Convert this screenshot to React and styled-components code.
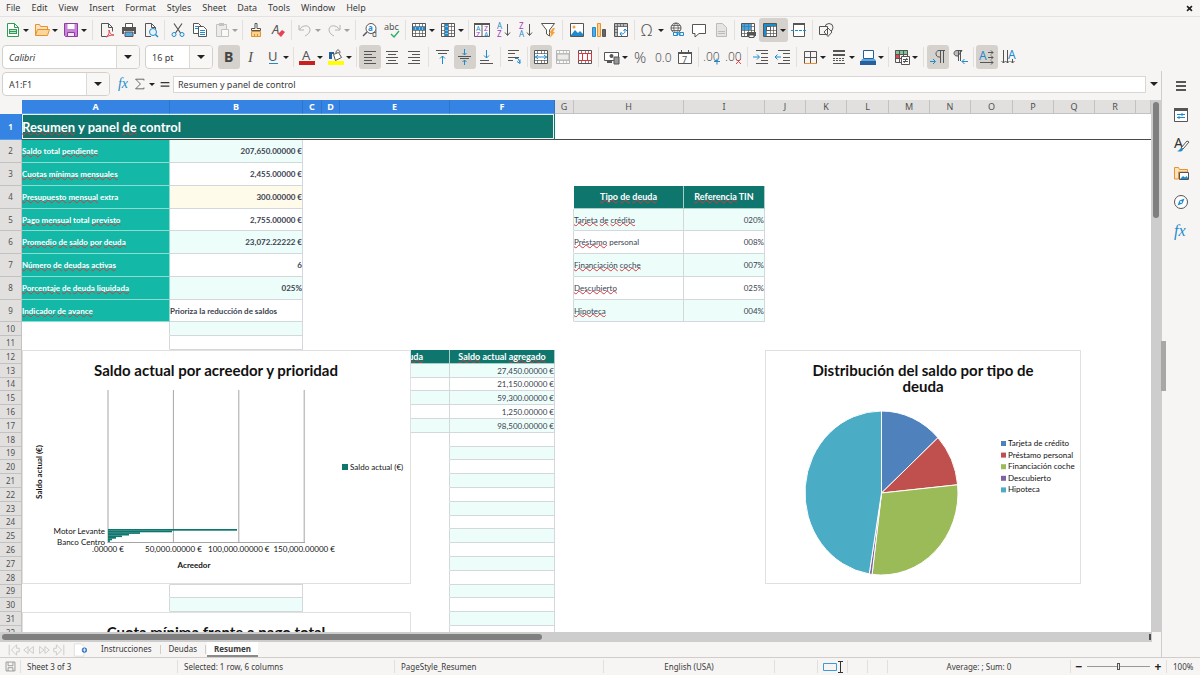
import React from 'react'
import styled, { createGlobalStyle } from 'styled-components'

const UI_FONT = '"Noto Sans", "Open Sans", sans-serif'
const CELL_FONT = 'Lato, "Open Sans", sans-serif'

const GlobalStyle = createGlobalStyle`
  * {
    box-sizing: border-box;
  }

  body {
    margin: 0;
    background: #f6f5f4;
    color: #3a3a3a;
    font-family: ${UI_FONT};
    font-size: 9px;
  }

  button, input {
    font: inherit;
    color: inherit;
    border: 0;
    padding: 0;
    margin: 0;
    background: none;
    outline: none;
  }
`

const Window = styled.div`
  display: flex;
  flex-direction: column;
  height: 100vh;
  overflow: hidden;
`

/* ---------- menu and toolbars ---------- */

const MenuBar = styled.nav`
  display: flex;
  align-items: center;
  height: 17px;
  flex: none;
  padding: 0 5px 0 6px;
  border-bottom: 1px solid #e4e2e0;
`

const MenuItem = styled.button`
  margin-right: 11px;
  line-height: 16px;
`

const CloseButton = styled.button`
  margin-left: auto;
  width: 11px;
  height: 14px;
  display: flex;
  align-items: center;
  justify-content: center;
`

const ToolBar = styled.div`
  display: flex;
  align-items: center;
  height: 27px;
  flex: none;
  padding: 0 0 1px 2px;
`

const ToolButton = styled.button`
  display: flex;
  align-items: center;
  flex: none;
  width: ${p => (p.$drop ? 29 : 22)}px;
  height: 24px;
  padding-left: 3px;
  border-radius: 3px;
  background: ${p => (p.$on ? '#d5d1cd' : 'transparent')};
  opacity: ${p => (p.$dim ? 0.4 : 1)};
`

const Separator = styled.span`
  flex: none;
  width: ${p => p.$wide ? 7 : 5}px;
  height: 20px;
  display: flex;
  justify-content: center;

  &::before {
    content: '';
    width: 1px;
    background: #e2e0dd;
  }
`

const Caret = styled.span`
  flex: none;
  border: solid transparent;
  border-width: 3px 3px 0;
  border-top-color: #222;
  margin-left: 2px;
`

const Combo = styled.div`
  display: flex;
  flex: none;
  width: ${p => p.$width}px;
  height: 24px;
  margin-right: 5px;
  border: 1px solid #d3cfcb;
  border-radius: 4px;
  background: #fff;
  overflow: hidden;

  input {
    flex: 1;
    min-width: 0;
    padding-left: 6px;
    font-style: ${p => (p.$italic ? 'italic' : 'normal')};
  }

  button {
    width: 23px;
    display: flex;
    align-items: center;
    justify-content: center;
    border-left: 1px solid #dcd9d6;
    background: #f8f7f6;
  }
`

const BigCaret = styled.span`
  border: solid transparent;
  border-width: 4px 4px 0;
  border-top-color: #222;
`

/* ---------- body ---------- */

const Main = styled.main`
  display: flex;
  flex: 1;
  min-height: 0;
`

const Document = styled.section`
  display: flex;
  flex-direction: column;
  flex: 1;
  min-width: 0;
`

const FormulaBar = styled.div`
  display: flex;
  align-items: center;
  flex: none;
  height: 29px;
  padding: 0 0 3px 2px;
`

const FormulaButton = styled.button`
  display: flex;
  align-items: center;
  justify-content: center;
  flex: none;
  width: ${p => (p.$drop ? 24 : 17)}px;
`

const FormulaInput = styled.input`
  flex: 1;
  min-width: 0;
  height: 17px;
  padding-left: 4px;
  border: 1px solid #d9d6d3;
  background: #fff;
`

const FormulaDrop = styled.button`
  width: 15px;
  display: flex;
  justify-content: center;
`

const SheetRow = styled.div`
  display: flex;
  flex: 1;
  min-height: 0;
`

const SheetView = styled.div`
  position: relative;
  flex: 1;
  min-width: 0;
  background: #fff;
  overflow: hidden;
`

const Grid = styled.table`
  width: 100%;
  table-layout: fixed;
  border-collapse: separate;
  border-spacing: 0;
  font-family: ${CELL_FONT};
  font-size: 8px;
  line-height: 12px;

  th, td {
    padding: 0;
    overflow: hidden;
    white-space: nowrap;
  }
`

const HeadCell = styled.th`
  font-family: ${UI_FONT};
  font-size: ${p => (p.scope === 'col' ? 9 : 8)}px;
  font-weight: ${p => (p.$on ? 700 : 400)};
  color: ${p => (p.$on ? '#fff' : '#505050')};
  background: ${p => (p.$on ? '#3584e4' : '#e1e0df')};
  border-right: 1px solid ${p => (p.$on ? '#2c74cc' : '#c4c2c0')};
  border-bottom: 1px solid ${p => (p.$on ? '#5f9fe8' : '#c4c2c0')};
`

const Corner = styled.th`
  background: #f6f5f4;
`

const Cell = styled.td`
  background: ${p => p.$bg || '#fff'};
  color: ${p => p.$color || '#3b4250'};
  font-size: ${p => (p.$heading ? 9 : 8)}px;
  font-weight: ${p => (p.$bold ? 700 : 400)};
  text-align: ${p => p.$align || 'left'};
  border-right: 1px solid ${p => p.$side || p.$line || '#fff'};
  border-bottom: 1px solid ${p => p.$line || '#fff'};
`

const TitleCell = styled.td`
  background: #0f766e;
  color: #fff;
  font-size: 13px;
  font-weight: 700;
  line-height: 20px;
  border-right: 1px solid #0f766e;
  border-bottom: 1px solid #4a4a4a;
  box-shadow: inset 0 0 0 1px #e6f3f1;
`

const FrozenCell = styled.td`
  border-bottom: 1px solid #4a4a4a;
`

const Misspelt = styled.span`
  text-decoration: underline wavy #d9363e 1px;
  text-decoration-skip-ink: none;
  text-underline-offset: -1px;
`

const FloatingChart = styled.figure`
  position: absolute;
  left: ${p => p.$x}px;
  top: ${p => p.$y}px;
  margin: 0;
  background: #fff;
  border: 1px solid #e0e0e0;

  svg {
    display: block;
    font-family: ${CELL_FONT};
    font-size: 8px;
  }
`

const VScroll = styled.div`
  flex: none;
  width: 10px;
  padding: 2px;
  background: #cdcdcd;

  &::before {
    content: '';
    display: block;
    height: 22%;
    border-radius: 3px;
    background: #7f7f7f;
  }
`

const HScroll = styled.div`
  display: flex;
  align-items: center;
  justify-content: space-between;
  flex: none;
  height: 10px;
  margin-right: 9px;
  padding: 2px 1px 2px 2px;
  background: #cdcdcd;

  &::before {
    content: '';
    width: 47%;
    height: 6px;
    border-radius: 3px;
    background: #7f7f7f;
  }

  &::after {
    content: '';
    width: 2px;
    height: 6px;
    background: #4d4d4d;
  }
`

const TabBar = styled.div`
  display: flex;
  align-items: stretch;
  flex: none;
  height: 15px;
  padding-left: 6px;
  font-size: 8px;
`

const TabNav = styled.button`
  width: 15px;
  display: flex;
  align-items: center;
  justify-content: center;
`

const AddTab = styled.button`
  width: 28px;
  display: flex;
  align-items: center;
  justify-content: center;
`

const Tab = styled.button`
  padding: 0 7px;
  line-height: 13px;
  font-weight: ${p => (p.$on ? 700 : 400)};
  background: ${p => (p.$on ? '#fff' : 'transparent')};
  border-bottom: 2px solid ${p => (p.$on ? '#8a8a8a' : 'transparent')};
`

const TabLine = styled.span`
  width: 1px;
  margin: 3px 1px;
  background: #d0cecb;
`

const SideBar = styled.aside`
  position: relative;
  display: flex;
  flex-direction: column;
  align-items: center;
  flex: none;
  width: 39px;
  border-left: 1px solid #d0cdca;
`

const SideButton = styled.button`
  width: 28px;
  height: 29px;
  display: flex;
  align-items: center;
  justify-content: center;
`

const SideHandle = styled.button`
  position: absolute;
  left: -1px;
  top: 46%;
  width: 5px;
  height: 50px;
  background: #a9a7a5;
`

const StatusBar = styled.footer`
  display: grid;
  grid-template-columns: 21fr 157fr 217fr 209fr 171fr 43fr 30fr 20fr 20fr 183fr 96fr 33fr;
  align-items: center;
  flex: none;
  height: 18px;
  border-top: 1px solid #d0cdca;
  font-size: 8px;
`

const StatusItem = styled.div`
  display: flex;
  align-items: center;
  justify-content: ${p => (p.$center ? 'center' : 'flex-start')};
  min-width: 0;
  height: 13px;
  padding: 0 ${p => (p.$tight ? 4 : 6)}px;
  white-space: nowrap;
  border-right: 1px solid #e2e0dd;

  &:last-child {
    border-right: 0;
  }
`

const ZoomButton = styled.button`
  flex: none;
  width: 8px;
  font-size: 12px;
  font-weight: 700;
  line-height: 12px;
  color: #222;
`

const ZoomRange = styled.input`
  flex: 1;
  min-width: 0;
  height: 9px;
  margin: 0 4px;
  appearance: none;
  background: linear-gradient(#999, #999) center / 100% 1px no-repeat;

  &::-webkit-slider-thumb {
    appearance: none;
    width: 3px;
    height: 7px;
    border: 1px solid #555;
    background: #eee;
  }
`

/* ---------- icons, all on a 16px square ---------- */

const ink = '#555'
const blue = '#1e8bcd'
const red = '#c9211e'

const mesh = (
  <g fill="none" stroke={ink}>
    <path fill="#fff" d="M1.5 1.5h13v13h-13z" />
    <path strokeWidth=".7" d="M1.5 4.5h13M1.5 8.5h13M1.5 11.5h13M4.5 1.5v13M8.5 1.5v13M11.5 1.5v13" />
  </g>
)

const glyph = (text, x, y, size, fill, extra) => (
  <text x={x} y={y} fontSize={size} fill={fill} fontFamily="Noto Sans, sans-serif" {...extra}>{text}</text>
)

const ICONS = {
  new: <><path d="M2.5 1.5h7l4 4v9h-11z" fill="#fff" stroke="#2f9e54" /><path d="M9.5 1.5v4h4" fill="none" stroke="#2f9e54" /><path d="M4 7h8v5H4z" fill="#2f9e54" /><path d="M5 8.5h6M5 10.5h6" stroke="#bfe8cb" /></>,
  open: <><path d="M1.5 13.5v-11h4l1 2h7v3" fill="#fbe3bf" stroke="#e8912d" /><path d="M3.5 7.5h12l-2 6h-12z" fill="#fcd59b" stroke="#e8912d" /></>,
  save: <><path d="M1.5 1.5h13v13h-12l-1-1z" fill="#c783d6" stroke="#8e3ca3" /><path d="M4.5 2h7v5h-7z" fill="#fff" /><path d="M4.5 10.5h7v4h-7z" fill="#f3e4f7" stroke="#8e3ca3" /></>,
  pdf: <><path d="M2.5 14.5v-13h7l4 4v4M9.5 1.5v4h4M2.5 14.5h5" fill="none" stroke={ink} /><path d="M7 15c3-2 3.5-4 3-7 1 4 2.5 5 5 5-3 0-5 .5-8 2z" fill="none" stroke="#d9434e" /></>,
  print: <><path d="M4.5 5V1.5h7V5" fill="#fff" stroke={ink} /><path d="M1 5h14v7h-2V9H3v3H1z" fill={ink} /><path d="M4 10h8v4.5H4z" fill="#5aa9e0" stroke={ink} /></>,
  preview: <><path d="M8 14.5H2.5v-13h6l4 4v2M8.5 1.5v4h4" fill="none" stroke={ink} /><circle cx="10" cy="10" r="3.5" fill="#e4f2fb" stroke={blue} /><path d="M12.5 12.5l2.500 2.500" stroke={blue} strokeWidth="1.5" /></>,
  cut: <><path d="M4 1.5l6.500 9.500M12 1.500L5.500 11" stroke={ink} fill="none" strokeWidth="1.2" /><circle cx="4" cy="12.5" r="2" fill="none" stroke={blue} /><circle cx="12" cy="12.5" r="2" fill="none" stroke={blue} /></>,
  copy: <><path d="M1.5 1.5h5l3 3v7h-8z" fill="#fff" stroke={ink} /><path d="M6.5 4.5h5l3 3v7h-8z" fill="#fff" stroke={ink} /><path d="M8 8.5h5M8 10.5h5M8 12.5h5M3 4.5h3M3 6.5h3" stroke={blue} /></>,
  paste: <><path d="M2.5 2.5h10v12h-10z" fill="#ddd" stroke="#777" /><path d="M5 1h5v3H5z" fill="#777" /><path d="M7.5 7.5h7v7h-7z" fill="#fff" stroke="#777" /></>,
  clone: <><path d="M7 1.5h2v5h3.500v2h-9v-2H7z" fill="#fff" stroke={ink} /><path d="M3.5 9.5h9v5h-9z" fill="#fbd38d" stroke="#e8912d" /><path d="M6.5 12v2M9.5 12v2" stroke="#e8912d" /></>,
  clear: <>{glyph('A', 2, 12, 13, ink, { fontStyle: 'italic' })}<path d="M8 12l4-4 3 2-4 5z" fill="#e8424e" /></>,
  undo: <path d="M2 3v5h5M2.5 7.5C5 3 13 2 13 8c0 3-3 5-5 6" fill="none" stroke={ink} />,
  redo: <path d="M14 3v5H9M13.5 7.5C11 3 3 2 3 8c0 3 3 5 5 6" fill="none" stroke={ink} />,
  find: <><circle cx="9" cy="6.5" r="5" fill="#fff" stroke={ink} /><path d="M5 10l-4 4" stroke={ink} strokeWidth="1.5" />{glyph('a', 6, 9, 8, blue, { fontWeight: 700 })}{glyph('d', 10, 15, 8, ink)}</>,
  spell: <>{glyph('abc', 0, 8, 9, ink)}<path d="M7 12l3 3 5-6" fill="none" stroke="#27ae60" strokeWidth="1.3" /></>,
  row: <>{mesh}<path d="M2 5h12v3H2z" fill={blue} /><path d="M4.5 5v3M8.5 5v3M11.5 5v3" stroke="#7dbde6" /></>,
  col: <>{mesh}<path d="M5 2h3v12H5z" fill={blue} /><path d="M5 4.5h3M5 8.5h3M5 11.5h3" stroke="#7dbde6" /></>,
  sort: <><path d="M.5 1.5h15v13H.5zM8 2v12" fill="#fff" stroke={ink} /><path d="M0 1h16v2H0z" fill={ink} />{glyph('A', 2, 9, 7, blue)}{glyph('Z', 2, 15, 7, '#a33bc2')}{glyph('Z', 10, 9, 7, '#a33bc2')}{glyph('A', 10, 15, 7, blue)}</>,
  asc: <>{glyph('A', 1, 7, 8, blue)}{glyph('Z', 1, 15, 8, '#a33bc2')}<path d="M11.5 2v11M9 10.5l2.500 3 2.500-3" fill="none" stroke={ink} /></>,
  desc: <>{glyph('Z', 1, 7, 8, '#a33bc2')}{glyph('A', 1, 15, 8, blue)}<path d="M11.5 2v11M9 10.5l2.500 3 2.500-3" fill="none" stroke={ink} /></>,
  filter: <><path d="M1.5 1.5h13L9.500 8v6l-3-2V8z" fill="#fff" stroke={ink} /><path d="M13 6l-4 5h2l-1 5 5-6h-2l2-4z" fill="#f2a33a" /></>,
  image: <><path d="M1.5 1.5h13v13h-13z" fill="#fff" stroke={ink} /><path d="M2 13l4-5 3 3 2-2 3 3v2H2z" fill={blue} /><circle cx="5" cy="5" r="1.5" fill="#f2a33a" /></>,
  chart: <><path d="M1.5 5.5h3v9h-3z" fill="#5aa9e0" stroke={blue} /><path d="M6.5 1.5h3v13h-3z" fill="#fbd38d" stroke="#e8912d" /><path d="M11.5 7.5h3v7h-3z" fill="#666" stroke={ink} /></>,
  pivot: <><path d="M1.5 1.5h13v13h-13z" fill="#fff" stroke={ink} /><path d="M2 2h12v3H2zM2 5h3v9H2z" fill="#bbb" /><path d="M4.5 2v12M2 4.5h12M7.5 2v3M10.5 2v3M2 7.5h3M2 10.5h3" stroke={ink} strokeWidth=".7" /><path d="M7 12c5 0 5-1 5-5M10.5 9L12 7l2 2M8.5 10L7 12l2 2" fill="none" stroke={blue} /></>,
  omega: glyph('Ω', 1, 14, 16, ink, { fontWeight: 300 }),
  link: <><circle cx="7" cy="6" r="5" fill="none" stroke={ink} /><path d="M2 6h10M7 1c-3 3-3 7 0 10M7 1c3 3 3 7 0 10M3 3.5h8M3 8.5h8" fill="none" stroke={ink} strokeWidth=".8" /><path d="M4.5 10.5h4v3h-4zM10.5 10.5h4v3h-4zM7 12h5" fill="#f6f5f4" stroke={blue} /></>,
  comment: <path d="M1.5 2.5h13v9H8l-4 3.500v-3.500H1.500z" fill="#fff" stroke={ink} />,
  header: <path d="M3.5 1.5h6l4 4v9h-10zM5 9.5h7M5 11.5h7" fill="#ccc" stroke="#666" />,
  printRange: <>{mesh}<path d="M2 2h9v6H2z" fill={blue} opacity=".8" /><path d="M7 10h9v4H7z" fill={ink} /><path d="M9 13h5v2.500H9z" fill="#fff" stroke={ink} /></>,
  freeze: <>{mesh}<path d="M2 2h12v2H2zM2 4h2v10H2z" fill={blue} /><path d="M4.5 4.5h4v4h-4z" fill="#fff" stroke={ink} /></>,
  split: <><path d="M2.5 1.5h11v13h-11z" fill="#fff" stroke={ink} /><path d="M2 1h12v2H2z" fill={ink} /><path d="M0 8.5h16" stroke={blue} strokeDasharray="3 1" /></>,
  shapes: <><circle cx="11" cy="5.5" r="4" fill="#f6f5f4" stroke={ink} /><path d="M1.5 4.5h8v8h-8zM10 6l4 4-4 4.500-4-4.500z" fill="#f6f5f4" stroke={ink} /></>,
  bold: glyph('B', 3, 13, 14, '#444', { fontWeight: 700 }),
  italic: <text x="5" y="13" fontSize="15" fill={ink} fontStyle="italic" fontFamily="Liberation Serif, serif">I</text>,
  underline: <>{glyph('U', 3, 12, 13, ink)}<path d="M4 14.5h9" stroke={blue} /></>,
  fontColor: <>{glyph('A', 3, 11, 13, ink)}<path d="M0 12h16v4H0z" fill={red} /></>,
  highlight: <><path d="M5.5 5.5l5-2 3 5-6 3z" fill="#fff" stroke={ink} /><path d="M1 3h5v2H4v5H1z" fill="#245f9e" /><path d="M8 4c0-4 4-4 4 0" fill="none" stroke={ink} /><path d="M0 12h16v4H0z" fill="#ffff00" /></>,
  left: <path d="M2 2.5h12M2 5.5h8M2 8.5h12M2 11.5h8M2 14.5h12" stroke={ink} />,
  center: <path d="M2 2.5h12M4 5.5h8M2 8.5h12M4 11.5h8M2 14.5h12" stroke={ink} />,
  right: <path d="M2 2.5h12M6 5.5h8M2 8.5h12M6 11.5h8M2 14.5h12" stroke={ink} />,
  top: <><path d="M1 1.5h13M3 4.5h9" stroke={ink} /><path d="M7.5 15V7M5 9.5L7.500 7 10 9.500" stroke={blue} fill="none" /></>,
  middle: <><path d="M1 7.5h13M3 9.5h9" stroke={ink} /><path d="M7.5 0v6M5.5 4l2 2 2-2M7.5 16v-5M5.5 13l2-2 2 2" stroke={blue} fill="none" /></>,
  bottom: <><path d="M1 11.5h9M1 14.5h13" stroke={ink} /><path d="M7.5 1v8M5 6.5L7.500 9 10 6.500" stroke={blue} fill="none" /></>,
  wrap: <><path d="M2 1.5h11M2 4.5h7M2 8.5h11M2 11.5h5" stroke={ink} /><path d="M9 9.5h3l2 4M11 12.5l3 2v-4" stroke={blue} fill="none" /></>,
  merge: <>{mesh}<path d="M2 5h12v6H2z" fill="#fff" /><path d="M2 8h12M5 6L2.500 8 5 10M11 6l2.500 2-2.500 2" stroke={blue} fill="none" /></>,
  mergeOff: <>{mesh}<path d="M2 5h12v6H2z" fill="#ddd" stroke={ink} /></>,
  unmerge: <>{mesh}<path d="M1.5 4.5h13v7h-13zM5.5 4.5v7M10.5 4.5v7" fill="#fff" stroke="#d9363e" /></>,
  currency: <><path d="M.5 3.5h14v8H.5z" fill="#fff" stroke={ink} /><circle cx="7.5" cy="7" r="2" fill={ink} /><path d="M10 8h5v7h-5z" fill="#999" stroke={ink} /><path d="M3 12h5v2H3z" fill={ink} /></>,
  percent: glyph('%', 1, 14, 15, ink, { fontWeight: 300 }),
  number: glyph('0.0', 0, 13, 12, ink, { fontWeight: 300 }),
  date: <><path d="M1.5 3.5h13v11h-13z" fill="#fff" stroke={ink} /><path d="M1 3h14v2H1zM4 1h1v3H4zM11 1h1v3h-1z" fill={ink} />{glyph('7', 5, 14, 9, ink)}</>,
  addDec: <>{glyph('.00', -1, 12, 12, ink, { fontWeight: 300 })}<path d="M10 12.5h6M13 9.5v6" stroke={blue} /></>,
  delDec: <>{glyph('.00', -1, 12, 12, ink, { fontWeight: 300 })}<path d="M10 10l5 5M15 10l-5 5" stroke="#e8424e" /></>,
  indent: <><path d="M3 1.5h12M8 4.5h7M8 8.5h7M8 11.5h7M3 14.5h12" stroke={ink} /><path d="M0 8h6M4 5.5L6.500 8 4 10.500" stroke={blue} fill="none" /></>,
  outdent: <><path d="M3 1.5h12M8 4.5h7M8 8.5h7M8 11.5h7M3 14.5h12" stroke={ink} /><path d="M0 8h6M2.5 5.5L0 8l2.500 2.500" stroke={blue} fill="none" /></>,
  borders: <><path d="M2.5 14V2.500h12V14M2.5 8.5h12M8.5 2.5V14" fill="none" stroke={ink} /><path d="M2 14.5h13" stroke="#e8912d" /></>,
  borderStyle: <><path d="M2 2h12M2 6h12" stroke={ink} strokeWidth="2" /><path d="M2 9.5h12M2 11.5h12" stroke={ink} strokeDasharray="2 1" /><path d="M2 14.5h12" stroke={ink} /></>,
  borderColor: <><path d="M3.5 1.5h10v8h-10z" fill="#fff" stroke="#245f9e" /><path d="M2 10l-1 2h15l-1-2z" fill="#5aa9e0" /><path d="M0 12h16v4H0z" fill="#2a6099" /></>,
  cond: <><path d="M1 1h13v4H1z" fill="#7cc796" /><path d="M1 5h5v4H1z" fill="#e8424e" /><path d="M1.5 1.5h12v12h-12zM1.5 5.5h12M1.5 9.5h12M5.5 1.5v12M9.5 1.5v12" fill="none" stroke={ink} /><path d="M7.5 7.5h8v8h-8z" fill="#fff" stroke={ink} /><path d="M9 10.5h5M9 12.5h5M13 9l-3 5" stroke={ink} /></>,
  ltr: <><path d="M10.5 14V2M13.5 14V2M15 1.5H9C5 1.500 5 8 9 8h1" fill="none" stroke={ink} /><path d="M0 12.5h5M3 10l2.500 2.500L3 15" stroke={blue} fill="none" /></>,
  rtl: <><path d="M6.5 12V2M8.5 12V2M10 1.5H5C1 1.500 1 7 5 7h1z" fill="#bbb" stroke={ink} /><path d="M10 12.5h6M12.5 10L10 12.500l2.500 2.500" stroke={blue} fill="none" /></>,
  textH: <>{glyph('A', 0, 11, 12, blue)}<path d="M9 3.5h5M9 8.5h5M1 13.5h13M12 1.5l2 2-2 2M12 6.5l2 2-2 2M12 11.5l2 2-2 2" stroke={ink} fill="none" /></>,
  textV: <>{glyph('A', 7, 10, 12, blue)}<path d="M2.5 1v13M6.5 1v13M11.5 10v4M.5 12l2 2 2-2M4.5 12l2 2 2-2M9.5 12l2 2 2-2" stroke={ink} fill="none" /></>,
  fx: <text x="1" y="13" fontSize="16" fill={blue} fontStyle="italic" fontFamily="Liberation Serif, serif">fx</text>,
  sum: <path d="M12.5 4V2.500H3L8.500 8 3 13.500h9.500V12" fill="none" stroke={ink} />,
  equals: <path d="M3 6.5h10M3 10.5h10" stroke="#333" strokeWidth="1.5" />,
  menu: <path d="M3 4h10M3 8h10M3 12h10" stroke="#222" strokeWidth="1.5" />,
  props: <><path d="M1.5 2.5h13v12h-13z" fill="#fff" stroke={ink} /><path d="M1 1h14v3H1z" fill={ink} /><path d="M4 7.5h8M4 10.5h8M9 6v3M6 9v3" stroke={blue} /></>,
  styles: <>{glyph('A', 1, 12, 14, '#333')}<path d="M14 5l2 1-6 7-2-1z" fill="#fff" stroke={ink} /><path d="M4 15c3 0 2-3 5-3l1 1c0 3-4 3-6 2z" fill={blue} /></>,
  gallery: <><path d="M1.5 14V2.500h4l1 2h8V7M1.5 14h4V7h9" fill="#fbe3bf" stroke="#e8912d" /><path d="M6.5 7.5h9v7h-9z" fill="#fff" stroke={ink} /><path d="M7 14l3-3 2 1.500 1.500-1.500L15 13v1z" fill={blue} /></>,
  compass: <><circle cx="8" cy="8" r="6.5" fill="#fff" stroke={ink} /><path d="M11.5 4.5l-2 5-5 2 2-5z" fill={blue} /><circle cx="8" cy="8" r="1" fill="#fff" /></>,
  floppy: <path d="M2.5 2.5h11v11h-11zM5 3v4h6V3M5 13.5v-4h6v4" fill="none" stroke="#8a8a8a" />,
  close: <path d="M5 5l6 6M11 5l-6 6" stroke="#222" strokeWidth="2" />,
  navFirst: <path d="M2.5 2v12M11 2L5 8l6 6V10h3V6h-3z" fill="none" stroke="#c9c6c3" />,
  navPrev: <path d="M7 4L2 8l5 4zM13 4L8 8l5 4z" fill="none" stroke="#c9c6c3" />,
  navNext: <path d="M9 4l5 4-5 4zM3 4l5 4-5 4z" fill="none" stroke="#c9c6c3" />,
  navLast: <path d="M13.5 2v12M5 2l6 6-6 6V10H2V6h3z" fill="none" stroke="#c9c6c3" />,
  addSheet: <><path d="M1.5 1h8l3 3v11h-11z" fill="#fff" stroke="#ddd" /><circle cx="13" cy="8" r="3" fill="#2a6fc0" /><path d="M11 8h4M13 6v4" stroke="#fff" /></>,
}

const Svg = styled.svg`
  flex: none;
  display: block;
  overflow: visible;
`

function Icon({ name, size = 16 }) {
  return (
    <Svg width={size} height={size} viewBox="0 0 16 16" aria-hidden="true">
      {ICONS[name]}
    </Svg>
  )
}

/* ---------- toolbar contents: [icon, label, flags], d drop-down, o pressed, x disabled ---------- */

const STANDARD = [
  ['new', 'New', 'd'], ['open', 'Open', 'd'], ['save', 'Save', 'd'], '||',
  ['pdf', 'Export as PDF'], ['print', 'Print'], ['preview', 'Print Preview'], '|',
  ['cut', 'Cut'], ['copy', 'Copy'], ['paste', 'Paste', 'dx'], '|',
  ['clone', 'Clone Formatting'], ['clear', 'Clear Formatting'], '|',
  ['undo', 'Undo', 'dx'], ['redo', 'Redo', 'dx'], '||',
  ['find', 'Find and Replace'], ['spell', 'Spelling'], '|',
  ['row', 'Row', 'd'], ['col', 'Column', 'd'], '|',
  ['sort', 'Sort'], ['asc', 'Sort Ascending'], ['desc', 'Sort Descending'], ['filter', 'AutoFilter'], '||',
  ['image', 'Insert Image'], ['chart', 'Insert Chart'], ['pivot', 'Pivot Table'], '|',
  ['omega', 'Special Character', 'd'], ['link', 'Hyperlink'], ['comment', 'Comment'], ['header', 'Headers and Footers', 'x'], '|',
  ['printRange', 'Define Print Area'], ['freeze', 'Freeze Rows and Columns', 'do'], ['split', 'Split Window'], '|',
  ['shapes', 'Show Draw Functions'],
]

const FORMATTING = [
  ['bold', 'Bold', 'o'], ['italic', 'Italic'], ['underline', 'Underline', 'd'], '|',
  ['fontColor', 'Font Color', 'd'], ['highlight', 'Background Color', 'd'], '|',
  ['left', 'Align Left', 'o'], ['center', 'Center Horizontally'], ['right', 'Align Right'], '||',
  ['top', 'Align Top'], ['middle', 'Center Vertically', 'o'], ['bottom', 'Align Bottom'], '|',
  ['wrap', 'Wrap Text'], '|',
  ['merge', 'Merge and Center', 'o'], ['mergeOff', 'Merge Cells', 'x'], ['unmerge', 'Unmerge Cells'], '|',
  ['currency', 'Format as Currency', 'd'], ['percent', 'Format as Percent'], ['number', 'Format as Number'], ['date', 'Format as Date'], '|',
  ['addDec', 'Add Decimal Place'], ['delDec', 'Delete Decimal Place'], '|',
  ['indent', 'Increase Indent'], ['outdent', 'Decrease Indent'], '|',
  ['borders', 'Borders', 'd'], ['borderStyle', 'Border Style', 'd'], ['borderColor', 'Border Color', 'd'], '|',
  ['cond', 'Conditional', 'd'], '||',
  ['ltr', 'Left-To-Right', 'o'], ['rtl', 'Right-To-Left'], '|',
  ['textH', 'Text direction from left to right', 'o'], ['textV', 'Text direction from top to bottom'],
]

function Tools({ items }) {
  return items.map((item, i) => {
    if (typeof item === 'string') return <Separator key={i} $wide={item === '||'} />
    const [icon, label, flags = ''] = item
    const drop = flags.includes('d')
    return (
      <ToolButton key={i} aria-label={label} $drop={drop} $on={flags.includes('o')} $dim={flags.includes('x')}>
        <Icon name={icon} />
        {drop && <Caret />}
      </ToolButton>
    )
  })
}

/* ---------- sheet ---------- */

const COLUMNS = [
  ['A', 148], ['B', 133], ['C', 19], ['D', 18], ['E', 110], ['F', 105], ['G', 19], ['H', 110], ['I', 81],
  ['J', 41], ['K', 41], ['L', 42], ['M', 41], ['N', 41], ['O', 42], ['P', 41], ['Q', 41], ['R', 41], ['', null],
]

const ROWS = Array.from({ length: 40 }, (_, i) => i + 1)

const rowHeight = n => {
  if (n === 1) return 26
  if (n < 10) return n % 4 === 1 ? 22 : 23
  return n % 5 === 4 ? 13 : 14
}

const SUMMARY = [
  ['Saldo total pendiente', '207,650.00000 €'],
  ['Cuotas mínimas mensuales', '2,455.00000 €'],
  ['Presupuesto mensual extra', '300.00000 €'],
  ['Pago mensual total previsto', '2,755.00000 €'],
  ['Promedio de saldo por deuda', '23,072.22222 €'],
  ['Número de deudas activas', '6'],
  ['Porcentaje de deuda liquidada', '025%'],
  ['Indicador de avance', 'Prioriza la reducción de saldos'],
]

const RATES = [
  ['Tarjeta de crédito', '020%'],
  ['Préstamo personal', '008%'],
  ['Financiación coche', '007%'],
  ['Descubierto', '025%'],
  ['Hipoteca', '004%'],
]

const BALANCES = [
  ['Tarjeta de crédito', 27450, '#4f81bd'],
  ['Préstamo personal', 21150, '#c0504d'],
  ['Financiación coche', 59300, '#9bbb59'],
  ['Descubierto', 1250, '#8064a2'],
  ['Hipoteca', 98500, '#4bacc6'],
]

const TINT = '#edfdfa'
const LINE = '#d3d8dc'
const KNOWN = ['y', 'panel', 'control', 'total', 'extra', 'personal', 'TIN', 'actual']

const euro = n => `${n.toLocaleString('en-US')}.00000 €`

function Words({ text }) {
  return text.split(' ').map((word, i) => (
    <React.Fragment key={i}>
      {i > 0 && ' '}
      {KNOWN.includes(word) ? word : <Misspelt>{word}</Misspelt>}
    </React.Fragment>
  ))
}

const heading = text => ({ text, bg: '#0f766e', color: '#fff', bold: true, align: 'center', line: '#a9cfcb', check: true, heading: true })

function cellAt(col, row) {
  if (col === 'A' && row >= 2 && row <= 9) {
    return { text: SUMMARY[row - 2][0], bg: '#14b8a6', color: '#fff', bold: true, line: '#8edbd1', check: true }
  }
  if (col === 'B') {
    const bg = row === 4 ? '#fffbeb' : row % 2 ? '#fff' : TINT
    return { text: row <= 9 ? SUMMARY[row - 2][1] : '', bg, bold: true, align: row === 9 ? 'left' : 'right', line: LINE }
  }
  if ((col === 'H' || col === 'I') && row >= 4 && row <= 9) {
    if (row === 4) return heading(col === 'H' ? 'Tipo de deuda' : 'Referencia TIN')
    const [name, rate] = RATES[row - 5]
    return { text: col === 'H' ? name : rate, bg: row % 2 ? TINT : '#fff', align: col === 'H' ? 'left' : 'right', line: LINE, check: col === 'H' }
  }
  if (col === 'E' && row >= 12 && row <= 17) {
    if (row === 12) return heading('Tipo de deuda')
    return { text: BALANCES[row - 13][0], bg: row % 2 ? TINT : '#fff', line: LINE, check: true }
  }
  if (col === 'F' && row >= 12) {
    if (row === 12) return heading('Saldo actual agregado')
    return { text: row <= 17 ? euro(BALANCES[row - 13][1]) : '', bg: row % 2 ? TINT : '#fff', align: 'right', line: LINE }
  }
  // the empty cells left of a bordered column draw its left edge
  if ((col === 'E' && row > 17) || (col === 'A' && row > 9) || (col === 'G' && row > 4 && row < 10)) return { side: LINE }
  return {}
}

function Sheet() {
  return (
    <Grid>
      <colgroup>
        <col style={{ width: 22 }} />
        {COLUMNS.map(([name, width]) => <col key={name} style={width ? { width } : undefined} />)}
      </colgroup>
      <thead>
        <tr style={{ height: 14 }}>
          <Corner aria-label="Select all" />
          {COLUMNS.map(([name], i) => <HeadCell key={name} scope="col" $on={i < 6}>{name}</HeadCell>)}
        </tr>
      </thead>
      <tbody>
        {ROWS.map(row => (
          <tr key={row} style={{ height: rowHeight(row) }}>
            <HeadCell scope="row" $on={row === 1}>{row}</HeadCell>
            {row === 1 && <TitleCell colSpan={6}><Words text="Resumen y panel de control" /></TitleCell>}
            {row === 1 && COLUMNS.slice(6).map(([name]) => <FrozenCell key={name} />)}
            {row > 1 && COLUMNS.map(([name]) => {
              const cell = cellAt(name, row)
              return (
                <Cell key={name} $bg={cell.bg} $color={cell.color} $bold={cell.bold} $align={cell.align} $line={cell.line} $side={cell.side} $heading={cell.heading}>
                  {cell.check ? <Words text={cell.text} /> : cell.text}
                </Cell>
              )
            })}
          </tr>
        ))}
      </tbody>
    </Grid>
  )
}

/* ---------- charts ---------- */

const BARS = [129, 64, 32, 21, 14, 8, 4, 2]
const TICKS = ['.00000 €', '50,000.00000 €', '100,000.00000 €', '150,000.00000 €']

function CreditorChart() {
  return (
    <FloatingChart $x={22} $y={250}>
      <svg width="387" height="232" fill="#111">
        <text x="193" y="25" fontSize="15" fontWeight="700" textAnchor="middle">Saldo actual por acreedor y prioridad</text>
        {TICKS.map((tick, i) => (
          <g key={tick}>
            <path d={`M${85 + i * 65.4} 39v153`} stroke="#a6a6a6" />
            <text x={85 + i * 65.4} y="201" textAnchor="middle">{tick}</text>
          </g>
        ))}
        <path d="M85 191.5h197" stroke="#a6a6a6" />
        {BARS.map((length, i) => <rect key={i} x="85" y={178 + i * 1.6} width={length} height="1.7" fill="#0f766e" />)}
        <text x="82" y="183" textAnchor="end">Motor Levante</text>
        <text x="82" y="194" textAnchor="end">Banco Centro</text>
        <text x="171" y="217" fontWeight="700" textAnchor="middle">Acreedor</text>
        <text transform="translate(19 121) rotate(-90)" fontWeight="700" textAnchor="middle">Saldo actual (€)</text>
        <rect x="319" y="113" width="6" height="6" fill="#0f766e" />
        <text x="327" y="119">Saldo actual (€)</text>
      </svg>
    </FloatingChart>
  )
}

function PaymentChart() {
  return (
    <FloatingChart $x={22} $y={512}>
      <svg width="387" height="232" fill="#111">
        <text x="193" y="25" fontSize="15" fontWeight="700" textAnchor="middle">Cuota mínima frente a pago total</text>
      </svg>
    </FloatingChart>
  )
}

function DebtPie() {
  const total = BALANCES.reduce((sum, b) => sum + b[1], 0)
  const point = share => {
    const angle = share * 2 * Math.PI
    return `${115.5 + 76.5 * Math.sin(angle)} ${142 - 82 * Math.cos(angle)}`
  }
  let done = 0
  return (
    <FloatingChart $x={765} $y={250}>
      <svg width="314" height="232" fill="#111">
        <g fontSize="15" fontWeight="700" textAnchor="middle">
          <text x="157" y="25">Distribución del saldo por tipo de</text>
          <text x="157" y="41">deuda</text>
        </g>
        {BALANCES.map(([name, value, color], i) => {
          const from = done / total
          done += value
          const to = done / total
          return (
            <g key={name}>
              <path d={`M115.5 142L${point(from)}A76.5 82 0 ${to - from > 0.5 ? 1 : 0} 1 ${point(to)}z`} fill={color} stroke="#fff" />
              <rect x="235" y={90 + i * 11.6} width="5" height="5" fill={color} />
              <text x="242" y={95 + i * 11.6}>{name}</text>
            </g>
          )
        })}
      </svg>
    </FloatingChart>
  )
}

const MENUS = ['File', 'Edit', 'View', 'Insert', 'Format', 'Styles', 'Sheet', 'Data', 'Tools', 'Window', 'Help']

const SIDE = [['menu', 'Sidebar Settings'], ['props', 'Properties'], ['styles', 'Styles'], ['gallery', 'Gallery'], ['compass', 'Navigator'], ['fx', 'Functions']]

function App() {
  return (
    <Window>
      <GlobalStyle />
      <MenuBar>
        {MENUS.map(name => <MenuItem key={name}>{name}</MenuItem>)}
        <CloseButton aria-label="Close document"><Icon name="close" size={13} /></CloseButton>
      </MenuBar>
      <ToolBar><Tools items={STANDARD} /></ToolBar>
      <ToolBar>
        <Combo $width={138} $italic>
          <input aria-label="Font name" defaultValue="Calibri" />
          <button aria-label="Font list"><BigCaret /></button>
        </Combo>
        <Combo $width={68}>
          <input aria-label="Font size" defaultValue="16 pt" />
          <button aria-label="Size list"><BigCaret /></button>
        </Combo>
        <Tools items={FORMATTING} />
      </ToolBar>
      <Main>
        <Document>
          <FormulaBar>
            <Combo $width={108}>
              <input aria-label="Name box" defaultValue="A1:F1" />
              <button aria-label="Cell names"><BigCaret /></button>
            </Combo>
            <FormulaButton aria-label="Function Wizard"><Icon name="fx" size={14} /></FormulaButton>
            <FormulaButton aria-label="Select Function" $drop>
              <Icon name="sum" size={14} />
              <Caret />
            </FormulaButton>
            <FormulaButton aria-label="Formula"><Icon name="equals" size={14} /></FormulaButton>
            <FormulaInput aria-label="Input line" defaultValue="Resumen y panel de control" />
            <FormulaDrop aria-label="Expand formula bar"><BigCaret /></FormulaDrop>
          </FormulaBar>
          <SheetRow>
            <SheetView>
              <Sheet />
              <CreditorChart />
              <PaymentChart />
              <DebtPie />
            </SheetView>
            <VScroll />
          </SheetRow>
          <HScroll />
          <TabBar>
            <TabNav aria-label="First sheet"><Icon name="navFirst" size={14} /></TabNav>
            <TabNav aria-label="Previous sheet"><Icon name="navPrev" size={14} /></TabNav>
            <TabNav aria-label="Next sheet"><Icon name="navNext" size={14} /></TabNav>
            <TabNav aria-label="Last sheet"><Icon name="navLast" size={14} /></TabNav>
            <AddTab aria-label="Add sheet"><Icon name="addSheet" size={14} /></AddTab>
            <Tab>Instrucciones</Tab>
            <TabLine />
            <Tab>Deudas</Tab>
            <TabLine />
            <Tab $on>Resumen</Tab>
          </TabBar>
        </Document>
        <SideBar>
          {SIDE.map(([icon, label]) => <SideButton key={icon} aria-label={label}><Icon name={icon} /></SideButton>)}
          <SideHandle aria-label="Hide sidebar" />
        </SideBar>
      </Main>
      <StatusBar>
        <StatusItem $tight><Icon name="floppy" size={13} /></StatusItem>
        <StatusItem>Sheet 3 of 3</StatusItem>
        <StatusItem>Selected: 1 row, 6 columns</StatusItem>
        <StatusItem>PageStyle_Resumen</StatusItem>
        <StatusItem $center>English (USA)</StatusItem>
        <StatusItem />
        <StatusItem $center $tight>
          <Svg width="20" height="12" fill="none">
            <path d="M.5 2.5h13v7H.5z" stroke="#3a9bd8" />
            <path d="M15 .5h5M15 11.5h5M17.5 1v10" stroke="#333" />
          </Svg>
        </StatusItem>
        <StatusItem />
        <StatusItem />
        <StatusItem $center>Average: ; Sum: 0</StatusItem>
        <StatusItem $tight>
          <ZoomButton aria-label="Zoom out">−</ZoomButton>
          <ZoomRange type="range" aria-label="Zoom" defaultValue={50} />
          <ZoomButton aria-label="Zoom in">+</ZoomButton>
        </StatusItem>
        <StatusItem>100%</StatusItem>
      </StatusBar>
    </Window>
  )
}

export default App
